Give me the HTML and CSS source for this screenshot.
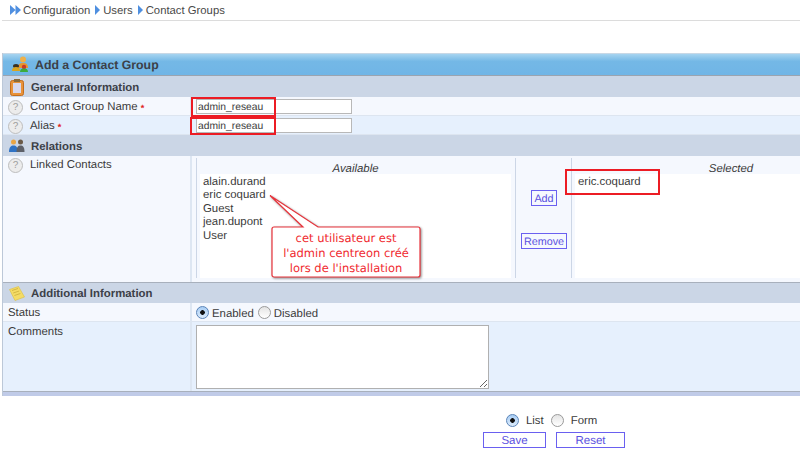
FILE: index.html
```html
<!DOCTYPE html>
<html lang="en">
<head>
<meta charset="utf-8">
<title>Add a Contact Group</title>
<link rel="stylesheet" href="styles.css">
</head>
<body>
<nav class="crumbs">
  <svg class="crumb-first" width="11" height="10" viewBox="0 0 11 10"><path d="M0 0l5.500 5-5.500 5zM5.500 0l5.500 5-5.500 5z" fill="#4f8fe0"/></svg>
  <span>Configuration</span>
  <svg class="crumb-arrow" width="5" height="10" viewBox="0 0 5 10"><path d="M0 0l5 5-5 5z" fill="#4f8fe0"/></svg>
  <span>Users</span>
  <svg class="crumb-arrow" width="5" height="10" viewBox="0 0 5 10"><path d="M0 0l5 5-5 5z" fill="#4f8fe0"/></svg>
  <span>Contact Groups</span>
</nav>

<form class="panel">
  <h1 class="panel-title">
    <svg class="title-icon" width="17" height="17" viewBox="0 0 17 17">
      <circle cx="11" cy="3.500" r="3" fill="#eeb04a"/>
      <path d="M6 12c0-4 2-5 5-5s5 1 5 5z" fill="#e8952e"/>
      <ellipse cx="4" cy="10" rx="3" ry="2" fill="#3a3020"/>
      <path d="M0 15c0-3 1.500-4 4-4s4 1 4 4z" fill="#d9a520"/>
      <circle cx="12" cy="11" r="2.200" fill="#c8382a"/>
      <path d="M8 16c0-2.500 1.500-3.500 4-3.500s4 1 4 3.500z" fill="#3cab3c"/>
    </svg>
    Add a Contact Group
  </h1>

  <h2 class="section">
    <svg class="section-icon" width="14" height="17" viewBox="0 0 14 17">
      <rect x="0.500" y="1.500" width="13" height="15" rx="2" fill="#e8923a" stroke="#c26d1e"/>
      <rect x="3" y="4" width="8" height="10" fill="#d8d8ee"/>
      <rect x="4" y="0" width="6" height="3" fill="#8a6a3a"/>
    </svg>
    General Information
  </h2>
  <div class="row row-a row-field">
    <label class="label"><span class="help">?</span>Contact Group Name <b class="req">*</b></label>
    <div class="value"><input class="text" type="text" value="admin_reseau"></div>
  </div>
  <div class="row row-b row-field">
    <label class="label"><span class="help">?</span>Alias <b class="req">*</b></label>
    <div class="value"><input class="text" type="text" value="admin_reseau"></div>
  </div>

  <h2 class="section">
    <svg class="section-icon" width="16" height="14" viewBox="0 0 16 14">
      <circle cx="4.500" cy="3" r="2.500" fill="#e9a544"/>
      <path d="M0 13c0-5 2-6.500 4.500-6.500S9 8 9 13z" fill="#2f72c4"/>
      <circle cx="11.500" cy="3" r="2.500" fill="#6a5a48"/>
      <path d="M7.500 13c0-5 1.500-6.500 4-6.500s4 1.500 4 6.500z" fill="#5d6068"/>
    </svg>
    Relations
  </h2>
  <div class="row row-a row-linked">
    <label class="label label-top"><span class="help">?</span>Linked Contacts</label>
    <div class="picker">
      <div class="picker-col">
        <div class="picker-head">Available</div>
        <ul class="picker-list">
          <li>alain.durand</li>
          <li>eric coquard</li>
          <li>Guest</li>
          <li>jean.dupont</li>
          <li>User</li>
        </ul>
      </div>
      <div class="picker-actions">
        <button class="btn btn-small" type="button">Add</button>
        <button class="btn btn-small" type="button">Remove</button>
      </div>
      <div class="picker-col picker-col-selected">
        <div class="picker-head">Selected</div>
        <ul class="picker-list">
          <li>eric.coquard</li>
        </ul>
      </div>
    </div>
  </div>

  <h2 class="section section-add">
    <svg class="section-icon" width="16" height="15" viewBox="0 0 16 15">
      <path d="M0.500 3.500L9.500 0.500 15.500 11 6 14.500z" fill="#f4dc66" stroke="#dcc040" stroke-width="0.600"/>
      <path d="M3 4.500l6-2M4.200 7l6-2M5.400 9.500l6-2" stroke="#c4a636" stroke-width="0.700"/>
    </svg>
    Additional Information
  </h2>
  <div class="row row-a row-status">
    <div class="label">Status</div>
    <div class="value value-radios">
      <label class="choice"><input class="radio" type="radio" name="status" checked>Enabled</label>
      <label class="choice"><input class="radio" type="radio" name="status">Disabled</label>
    </div>
  </div>
  <div class="row row-b row-comments">
    <div class="label label-top">Comments</div>
    <div class="value value-top"><textarea class="area"></textarea></div>
  </div>
  <div class="panel-foot"></div>
</form>

<div class="actions">
  <div class="actions-mode">
    <label class="choice choice-wide"><input class="radio" type="radio" name="mode" checked>List</label>
    <label class="choice choice-wide"><input class="radio" type="radio" name="mode">Form</label>
  </div>
  <div class="actions-buttons">
    <button class="btn btn-save" type="button">Save</button>
    <button class="btn btn-reset" type="button">Reset</button>
  </div>
</div>

<div class="mark mark-one"></div>
<div class="mark mark-two"></div>
<div class="mark mark-three"></div>
<div class="callout">
  <svg class="callout-shape" width="156" height="90" viewBox="0 0 156 90">
    <path class="callout-fill" d="M9 33H153a2 2 0 0 1 2 2V81a2 2 0 0 1-2 2H9a2 2 0 0 1-2-2V35a2 2 0 0 1 2-2z"/>
    <path class="callout-tail" d="M5 1.500L38 33H53z"/>
    <path class="callout-line" d="M38 33L5 1.500 53 33H153a2 2 0 0 1 2 2V81a2 2 0 0 1-2 2H9a2 2 0 0 1-2-2V35a2 2 0 0 1 2-2z"/>
  </svg>
  <p class="callout-text">cet utilisateur est<br>l'admin centreon créé<br>lors de l'installation</p>
</div>
</body>
</html>
```
FILE: styles.css
```css
* { box-sizing: border-box; }
html, body { margin: 0; height: 450px; overflow: hidden; background: #fff; }
body { position: relative; width: 800px; font: 11.400px/1.2 "Liberation Sans", Arial, sans-serif; color: #3a3a3a; text-rendering: geometricPrecision; }

.crumbs { height: 21px; margin-left: 2px; padding: 3px 0 0 8px; display: flex; align-items: center; gap: 3px; border-bottom: 1px solid #dcdcdc; color: #484848; font-size: 11.300px; }
.crumb-first { margin: -3px -1px 0 0; }
.crumb-arrow { margin: -3px 0 0 2px; }

.panel { margin: 32px 0 0 2px; width: 798px; border-left: 1px solid #bcc8d8; }
.panel-title { height: 23px; margin: 0; display: flex; align-items: center; padding: 2px 0 0 9px; gap: 6px; font-size: 12.300px; font-weight: bold; color: #3c4048; background: linear-gradient(#a6d4f0, #74b8e6 35%, #70b5e6); border-top: 1px solid #c8d8e6; border-bottom: 1px solid #9aa4b0; }
.title-icon { margin-top: -2px; }
.section { height: 21px; margin: 0; padding: 4px 0 0 6px; display: flex; align-items: center; gap: 6px; font-size: 11.400px; font-weight: bold; color: #3c4048; background: #cbd6e6; }
.section-icon { flex: none; width: 16px; margin-top: -3px; }
.section-add { border-top: 1px solid #a8b0bc; }

.row { display: grid; grid-template-columns: 189px minmax(0, 1fr); }
.row-a { background: #f5f8fe; }
.row-b { background: #e6f0fd; }
.row-field { height: 19px; border-bottom: 1px solid #dde5f0; }
.row-linked { height: 126px; }
.row-status { height: 19px; border-bottom: 1px solid #dde5f0; }
.row-comments { height: 69px; }
.label { display: flex; align-items: center; gap: 7px; padding: 4px 0 0 5px; border-right: 2px solid #dde6f2; }
.label-top { align-items: flex-start; padding-top: 3px; }
.row-status .label { padding-top: 3px; }
.row-comments .label { padding-top: 4px; }
.req { color: #e02020; font-size: 9px; margin-left: -4px; }
.help { flex: none; width: 15px; height: 15px; margin-top: -2px; border-radius: 50%; border: 1px solid #bdbdbd; background: #ececec; color: #a0a0a0; font-size: 10px; line-height: 13px; text-align: center; }
.label-top .help { margin-top: -1px; }
.value { display: flex; align-items: center; padding-left: 4px; }
.value-top { align-items: flex-start; padding-top: 3px; }
.value-radios { gap: 4px; padding-top: 1px; }
.text { width: 156px; height: 15px; margin-top: 1px; padding: 1px 1px 0; border: 1px solid #b8b8b8; background: #fff; font: 10.300px "Liberation Sans", Arial, sans-serif; color: #3a3a3a; outline: none; text-rendering: geometricPrecision; }
.area { display: block; width: 293px; height: 64px; border: 1px solid #b0b0b0; background: #fff; margin: 0; padding: 2px; }

.picker { display: flex; padding: 2px 0 4px 4px; overflow: hidden; }
.picker-col { width: 320px; flex: none; border-left: 1px solid #ccd6e6; border-right: 1px solid #ccd6e6; padding: 0 4px 0 3px; }
.picker-col-selected { border-right: 0; }
.picker-head { height: 16px; padding-top: 6px; text-align: center; font-style: italic; line-height: 11px; }
.picker-list { list-style: none; margin: 0; padding: 1.500px 2px 0 3px; height: 104px; background: #fff; line-height: 13.500px; font-size: 11.400px; }
.picker-col-selected .picker-list { padding: 2px 0 0 3px; }
.picker-actions { width: 55px; flex: none; display: flex; flex-direction: column; align-items: center; padding: 32px 0 0 1px; gap: 27px; }

.btn { display: block; padding: 1px 0 0; background: #fff; border: 1px solid #6a60f0; color: #5a50e0; font: 10.800px "Liberation Sans", Arial, sans-serif; text-align: center; height: 16px; text-rendering: geometricPrecision; }
.btn-small { padding: 1px 2px 0; background: transparent; }
.btn-save { width: 63px; font-size: 11.500px; }
.btn-reset { width: 69px; font-size: 11.500px; }

.panel-foot { height: 5px; background: #c0cbe8; border-top: 1px solid #a8b0bc; }

.actions { display: flex; flex-direction: column; margin: 17px 0 0 483px; width: 142px; gap: 4px; }
.actions-mode { display: flex; gap: 7px; padding-left: 23px; height: 15px; }
.actions-buttons { display: flex; gap: 10px; }

.choice { display: inline-flex; align-items: center; gap: 3px; padding-top: 4px; }
.choice-wide { gap: 7px; padding-top: 2px; }
.radio { appearance: none; width: 13px; height: 13px; margin: -4px 0 0; border-radius: 50%; border: 1px solid #9a9a9a; background: linear-gradient(#e4e4e4, #fff); flex: none; }
.choice-wide .radio { margin-top: -2px; }
.radio:checked { border-color: #5a84b8; background: radial-gradient(circle, #111 0 2px, transparent 2.600px), linear-gradient(#a8cdf4, #dcebfb); }

.mark { position: absolute; border: 2px solid #ec1c24; }
.mark-one { left: 191px; top: 97px; width: 85px; height: 20px; }
.mark-two { left: 190px; top: 117px; width: 86px; height: 18px; }
.mark-three { left: 565px; top: 169px; width: 95px; height: 26px; }

.callout { position: absolute; left: 265px; top: 194px; width: 158px; height: 90px; }
.callout-shape { position: absolute; inset: 0; overflow: visible; filter: drop-shadow(1px 1px 1px rgba(0, 0, 0, .45)); }
.callout-fill, .callout-tail { fill: #fff; }
.callout-line { fill: none; stroke: #e8323a; stroke-width: 1.200; }
.callout-text { position: absolute; left: 7px; top: 37px; width: 148px; margin: 0; text-align: center; font: 11.500px/15px "DejaVu Sans", Verdana, sans-serif; color: #f0282e; }
```
